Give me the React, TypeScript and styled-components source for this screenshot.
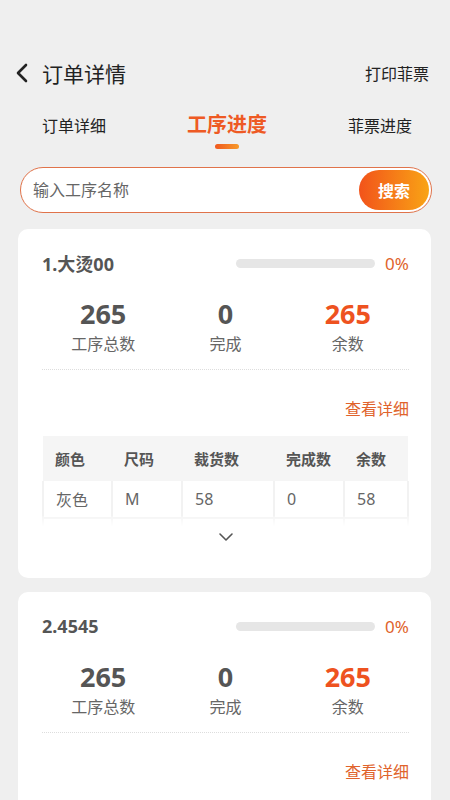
import styled, { createGlobalStyle } from 'styled-components';

const GlobalStyle = createGlobalStyle`
  html, body {
    margin: 0;
    padding: 0;
    background: #efefef;
    font-family: 'Noto Sans', 'Noto Sans CJK SC', sans-serif;
  }
  * { box-sizing: border-box; }
`;

type Process = {
  title: string;
  total: number;
  done: number;
  rest: number;
  rows?: string[][];
};

const processes: Process[] = [
  {
    title: '1.大烫00',
    total: 265,
    done: 0,
    rest: 265,
    rows: [['灰色', 'M', '58', '0', '58']],
  },
  { title: '2.4545', total: 265, done: 0, rest: 265 },
];

const columns = ['颜色', '尺码', '裁货数', '完成数', '余数'];

export default function App() {
  return (
    <Page>
      <GlobalStyle />
      <Header>
        <BackWrap>
          <svg width="14" height="20" viewBox="0 0 14 20">
            <path d="M11 2 L3 10 L11 18" fill="none" stroke="#222" strokeWidth="2.6" strokeLinecap="round" strokeLinejoin="round" />
          </svg>
          <Title>订单详情</Title>
        </BackWrap>
        <PrintLink>打印菲票</PrintLink>
      </Header>

      <Tabs>
        <Tab>订单详细</Tab>
        <Tab $active>工序进度</Tab>
        <Tab>菲票进度</Tab>
      </Tabs>

      <SearchBar>
        <SearchInput placeholder="输入工序名称" />
        <SearchButton>搜索</SearchButton>
      </SearchBar>

      <List>
        {processes.map((p) => (
          <Card key={p.title}>
            <CardHead>
              <CardTitle>{p.title}</CardTitle>
              <Progress>
                <Track>
                  <Fill style={{ width: `${(p.done / p.total) * 100}%` }} />
                </Track>
                <Percent>{Math.round((p.done / p.total) * 100)}%</Percent>
              </Progress>
            </CardHead>
            <Stats>
              <Stat>
                <StatValue>{p.total}</StatValue>
                <StatLabel>工序总数</StatLabel>
              </Stat>
              <Stat>
                <StatValue>{p.done}</StatValue>
                <StatLabel>完成</StatLabel>
              </Stat>
              <Stat>
                <StatValue $accent>{p.rest}</StatValue>
                <StatLabel>余数</StatLabel>
              </Stat>
            </Stats>
            <Divider />
            <DetailRow>
              <DetailLink>查看详细</DetailLink>
            </DetailRow>
            {p.rows && (
              <>
                <TableClip>
                  <Table>
                    <thead>
                      <tr>
                        {columns.map((c) => (
                          <Th key={c}>{c}</Th>
                        ))}
                      </tr>
                    </thead>
                    <tbody>
                      {p.rows.map((r, i) => (
                        <tr key={i}>
                          {r.map((v, j) => (
                            <Td key={j}>{v}</Td>
                          ))}
                        </tr>
                      ))}
                      <tr>
                        {columns.map((c) => (
                          <Td key={c} />
                        ))}
                      </tr>
                    </tbody>
                  </Table>
                </TableClip>
                <Expand>
                  <svg width="16" height="10" viewBox="0 0 16 10">
                    <path d="M2 2 L8 8 L14 2" fill="none" stroke="#555" strokeWidth="1.6" strokeLinecap="round" strokeLinejoin="round" />
                  </svg>
                </Expand>
              </>
            )}
          </Card>
        ))}
      </List>
    </Page>
  );
}

const Page = styled.div`
  width: 450px;
  height: 800px;
  overflow: hidden;
  background: #efefef;
  padding-top: 57px;
`;

const Header = styled.div`
  display: flex;
  align-items: center;
  justify-content: space-between;
  height: 32px;
  padding: 0 21px 0 15px;
`;

const BackWrap = styled.div`
  display: flex;
  align-items: center;
  gap: 13px;
`;

const Title = styled.span`
  font-size: 21px;
  color: #222;
`;

const PrintLink = styled.span`
  font-size: 16px;
  color: #222;
`;

const Tabs = styled.div`
  display: flex;
  align-items: flex-start;
  justify-content: space-between;
  margin-top: 21px;
  padding: 0 38px 0 42px;
  height: 45px;
`;

const Tab = styled.div<{ $active?: boolean }>`
  position: relative;
  font-size: ${(p) => (p.$active ? '20px' : '16px')};
  line-height: ${(p) => (p.$active ? '30px' : '28px')};
  margin-top: ${(p) => (p.$active ? '0' : '2px')};
  font-weight: ${(p) => (p.$active ? 700 : 400)};
  color: ${(p) => (p.$active ? '#ee5a24' : '#222')};
  &::after {
    content: '';
    display: ${(p) => (p.$active ? 'block' : 'none')};
    position: absolute;
    left: 50%;
    top: 34px;
    width: 24px;
    height: 5px;
    margin-left: -12px;
    border-radius: 3px;
    background: linear-gradient(90deg, #f0581e, #f79a2a);
  }
`;

const SearchBar = styled.div`
  display: flex;
  align-items: center;
  margin: 12px 18px 0 20px;
  height: 46px;
  border: 1.5px solid #e0734a;
  border-radius: 23px;
  background: #fff;
  padding: 0 2px 0 10px;
`;

const SearchInput = styled.input`
  flex: 1;
  border: none;
  outline: none;
  background: transparent;
  font-family: inherit;
  font-size: 16px;
  color: #333;
  &::placeholder {
    color: #666;
  }
`;

const SearchButton = styled.button`
  width: 70px;
  height: 40px;
  border: none;
  border-radius: 20px;
  background: linear-gradient(90deg, #f2531a, #f9a415);
  color: #fff;
  font-family: inherit;
  font-size: 16px;
  font-weight: 700;
`;

const List = styled.div`
  display: flex;
  flex-direction: column;
  gap: 14px;
  margin-top: 16px;
  padding: 0 19px 0 18px;
`;

const Card = styled.div`
  background: #fff;
  border-radius: 10px;
  padding: 22px 22px 26px 24px;
`;

const CardHead = styled.div`
  display: flex;
  align-items: center;
  justify-content: space-between;
  height: 24px;
`;

const CardTitle = styled.span`
  font-size: 18px;
  font-weight: 700;
  color: #555;
`;

const Progress = styled.div`
  display: flex;
  align-items: center;
  gap: 10px;
`;

const Track = styled.div`
  width: 139px;
  height: 9px;
  border-radius: 5px;
  background: #e6e6e6;
  overflow: hidden;
`;

const Fill = styled.div`
  height: 100%;
  background: #ee5a24;
`;

const Percent = styled.span`
  font-size: 17px;
  color: #e0632c;
  width: 24px;
`;

const Stats = styled.div`
  display: grid;
  grid-template-columns: 1fr 1fr 1fr;
  margin-top: 20px;
`;

const Stat = styled.div`
  display: flex;
  flex-direction: column;
  align-items: center;
`;

const StatValue = styled.span<{ $accent?: boolean }>`
  font-size: 27px;
  font-weight: 700;
  line-height: 38px;
  color: ${(p) => (p.$accent ? '#ee5220' : '#555')};
`;

const StatLabel = styled.span`
  font-size: 16px;
  line-height: 22px;
  color: #666;
`;

const Divider = styled.div`
  margin-top: 14px;
  border-top: 1px dotted #ddd;
`;

const DetailRow = styled.div`
  display: flex;
  justify-content: flex-end;
  margin-top: 26px;
  height: 24px;
  align-items: center;
`;

const DetailLink = styled.span`
  font-size: 16px;
  color: #e0632c;
`;

const TableClip = styled.div`
  margin-top: 16px;
  height: 90px;
  overflow: hidden;
  position: relative;
  &::after {
    content: '';
    position: absolute;
    left: 0;
    right: 0;
    bottom: 0;
    height: 10px;
    background: linear-gradient(rgba(255, 255, 255, 0.2), #fff);
  }
`;

const Table = styled.table`
  width: 100%;
  border-collapse: collapse;
  table-layout: fixed;
  & th:nth-child(1) { width: 69px; }
  & th:nth-child(2) { width: 70px; }
  & th:nth-child(3) { width: 92px; }
  & th:nth-child(4) { width: 70px; }
`;

const Th = styled.th`
  background: #f5f5f5;
  height: 45px;
  text-align: left;
  padding-left: 12px;
  font-size: 15px;
  font-weight: 700;
  color: #555;
`;

const Td = styled.td`
  height: 37px;
  padding-left: 12px;
  font-size: 16px;
  color: #666;
  border: 2px solid #f2f2f2;
  border-top: none;
`;

const Expand = styled.div`
  display: flex;
  justify-content: center;
  margin-top: 6px;
  height: 20px;
`;
